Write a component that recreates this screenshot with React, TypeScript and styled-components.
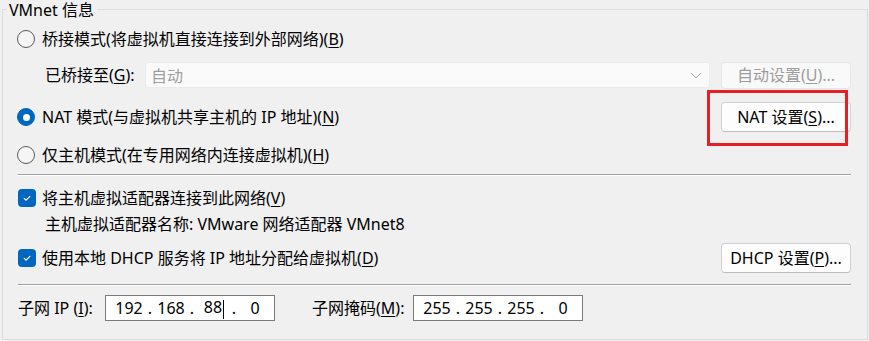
import React from 'react';
import styled, { createGlobalStyle } from 'styled-components';

const GlobalStyle = createGlobalStyle`
  html, body {
    margin: 0;
    padding: 0;
    background: #f0f0f0;
  }
  body {
    font-family: "Noto Sans", "Noto Sans CJK SC", sans-serif;
    font-size: 16px;
    color: #000;
  }
`;

export default function App() {
  return (
    <>
      <GlobalStyle />
      <Page>
        <Group>
          <Legend>VMnet 信息</Legend>

          <Row $mt={19} $h={20}>
            <Radio />
            <Label>
              桥接模式(将虚拟机直接连接到外部网络)(<Key>B</Key>)
            </Label>
          </Row>

          <Row $mt={12} $h={28} $indent={28}>
            <FieldLabel $w={100}>
              已桥接至(<Key>G</Key>):
            </FieldLabel>
            <Dropdown>
              <span>自动</span>
              <Chevron width="12" height="7" viewBox="0 0 12 7">
                <polyline points="1,1 6,6 11,1" />
              </Chevron>
            </Dropdown>
            <Button $h={27} disabled>
              自动设置(<Key>U</Key>)...
            </Button>
          </Row>

          <Row $mt={13} $h={30}>
            <Radio $checked />
            <Label>
              NAT 模式(与虚拟机共享主机的 IP 地址)(<Key>N</Key>)
            </Label>
            <Spacer />
            <Button $h={30}>
              NAT 设置(<Key>S</Key>)...
            </Button>
          </Row>

          <Row $mt={13} $h={20}>
            <Radio />
            <Label>
              仅主机模式(在专用网络内连接虚拟机)(<Key>H</Key>)
            </Label>
          </Row>

          <Separator $mt={9} />

          <Row $mt={12} $h={20}>
            <Checkbox>
              <svg width="18" height="18" viewBox="0 0 18 18">
                <polyline points="6.2,9.4 8.1,11.2 11.9,7.3" />
              </svg>
            </Checkbox>
            <Label $gap={6}>
              将主机虚拟适配器连接到此网络(<Key>V</Key>)
            </Label>
          </Row>

          <Row $mt={6} $h={20} $indent={28}>
            <Label $gap={0}>主机虚拟适配器名称: VMware 网络适配器 VMnet8</Label>
          </Row>

          <Row $mt={9} $h={30}>
            <Checkbox>
              <svg width="18" height="18" viewBox="0 0 18 18">
                <polyline points="6.2,9.4 8.1,11.2 11.9,7.3" />
              </svg>
            </Checkbox>
            <Label $gap={6}>
              使用本地 DHCP 服务将 IP 地址分配给虚拟机(<Key>D</Key>)
            </Label>
            <Spacer />
            <Button $h={30}>
              DHCP 设置(<Key>P</Key>)...
            </Button>
          </Row>

          <Separator $mt={11} />

          <Row $mt={9} $h={26} $indent={1}>
            <FieldLabel $w={87}>
              子网 IP (<Key>I</Key>):
            </FieldLabel>
            <IpBox>
              <IpField>192</IpField>
              <IpDot>.</IpDot>
              <IpField>168</IpField>
              <IpDot>.</IpDot>
              <IpField>
                88
                <Caret />
              </IpField>
              <IpDot>.</IpDot>
              <IpField>0</IpField>
            </IpBox>
            <FieldLabel $w={101} $ml={37}>
              子网掩码(<Key>M</Key>):
            </FieldLabel>
            <IpBox>
              <IpField>255</IpField>
              <IpDot>.</IpDot>
              <IpField>255</IpField>
              <IpDot>.</IpDot>
              <IpField>255</IpField>
              <IpDot>.</IpDot>
              <IpField>0</IpField>
            </IpBox>
          </Row>

          <Highlight />
        </Group>
      </Page>
    </>
  );
}

const Page = styled.div`
  width: 869px;
  height: 341px;
  padding: 9px 0 0 2px;
  box-sizing: border-box;
`;

const Group = styled.div`
  position: relative;
  width: 866px;
  height: 331px;
  box-sizing: border-box;
  border: 1px solid #dcdcdc;
  padding: 0 16px 0 14px;
  display: flex;
  flex-direction: column;
`;

const Legend = styled.div`
  position: absolute;
  top: -10px;
  left: 4px;
  padding: 0 3px 0 2px;
  line-height: 20px;
  background: #f0f0f0;
  white-space: nowrap;
`;

const Row = styled.div<{ $mt: number; $h: number; $indent?: number }>`
  display: flex;
  align-items: center;
  flex: none;
  margin-top: ${(p) => p.$mt}px;
  height: ${(p) => p.$h}px;
  padding-left: ${(p) => p.$indent ?? 0}px;
`;

const Label = styled.span<{ $gap?: number }>`
  margin-left: ${(p) => p.$gap ?? 7}px;
  line-height: 20px;
  white-space: nowrap;
`;

const FieldLabel = styled.span<{ $w: number; $ml?: number }>`
  flex: none;
  width: ${(p) => p.$w}px;
  margin-left: ${(p) => p.$ml ?? 0}px;
  line-height: 20px;
  white-space: nowrap;
`;

const Key = styled.span`
  text-decoration: underline;
  text-underline-offset: 2px;
  text-decoration-thickness: 1px;
`;

const Spacer = styled.div`
  flex: 1;
`;

const Radio = styled.span<{ $checked?: boolean }>`
  flex: none;
  position: relative;
  width: 18px;
  height: 18px;
  box-sizing: border-box;
  border-radius: 50%;
  border: 1px solid ${(p) => (p.$checked ? '#0067c0' : '#5a5a5a')};
  background: ${(p) => (p.$checked ? '#0067c0' : '#f5f5f5')};

  &::after {
    content: '';
    display: ${(p) => (p.$checked ? 'block' : 'none')};
    position: absolute;
    left: 4.5px;
    top: 4.5px;
    width: 7px;
    height: 7px;
    border-radius: 50%;
    background: #fff;
  }
`;

const Checkbox = styled.span`
  flex: none;
  width: 18px;
  height: 18px;
  margin-left: 1px;
  border-radius: 4px;
  background: #0067c0;

  svg {
    display: block;
    fill: none;
    stroke: #fff;
    stroke-width: 1.2;
    stroke-linecap: round;
    stroke-linejoin: round;
  }
`;

const Dropdown = styled.div`
  flex: 1;
  height: 26px;
  box-sizing: border-box;
  display: flex;
  align-items: center;
  justify-content: space-between;
  padding: 0 7px 0 5px;
  background: #fafafa;
  border: 1px solid #ebebeb;
  border-radius: 3px;
  color: #a0a0a0;
`;

const Chevron = styled.svg`
  fill: none;
  stroke: #a6a6a6;
  stroke-width: 1;
`;

const Button = styled.button<{ $h: number }>`
  flex: none;
  width: 130px;
  height: ${(p) => p.$h}px;
  margin-left: 11px;
  padding: 0;
  box-sizing: border-box;
  font: inherit;
  line-height: 20px;
  white-space: nowrap;
  color: #000;
  background: #fdfdfd;
  border: 1px solid #d0d0d0;
  border-bottom-color: #bdbdbd;
  border-radius: 4px;

  &:disabled {
    color: #9d9d9d;
    background: #f9f9f9;
    border-color: #e6e6e6;
  }
`;

const Separator = styled.div<{ $mt: number }>`
  flex: none;
  margin: ${(p) => p.$mt}px 0 0 1px;
  height: 1px;
  background: #a0a0a0;
  border-bottom: 1px solid #fff;
`;

const IpBox = styled.div`
  flex: none;
  width: 170px;
  height: 26px;
  box-sizing: border-box;
  display: flex;
  align-items: center;
  padding-left: 6px;
  background: #fff;
  border: 1px solid #7a7a7a;
`;

const IpField = styled.span`
  width: 34px;
  text-align: center;
  line-height: 20px;
`;

const IpDot = styled.span`
  width: 8px;
  text-align: center;
  line-height: 20px;
`;

const Caret = styled.span`
  display: inline-block;
  width: 1px;
  height: 19px;
  margin: 0 -2px 0 1px;
  vertical-align: middle;
  background: #000;
`;

const Highlight = styled.div`
  position: absolute;
  left: 704px;
  top: 80px;
  width: 141px;
  height: 56px;
  box-sizing: border-box;
  border: 3px solid #e81e25;
  pointer-events: none;
`;
